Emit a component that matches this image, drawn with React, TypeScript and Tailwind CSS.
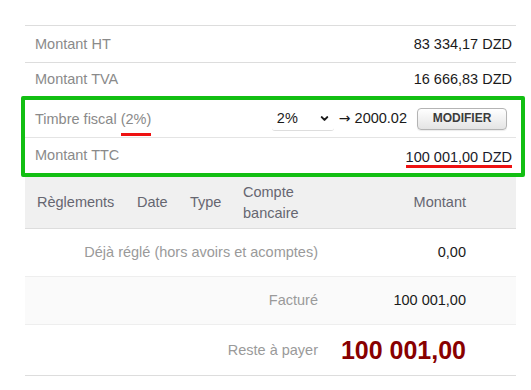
import { ChevronDown } from "lucide-react";

const cols = ["w-[100px]", "w-[53px]", "w-[53px]", "w-[99px]", "w-[148px]", "w-[38px]"];

function TotalRow({ label, value, className = "" }: { label: React.ReactNode; value: React.ReactNode; className?: string }) {
  return (
    <div className={`flex items-center justify-between pl-[10px] pr-[4px] ${className}`}>
      <span className="text-[#8a8a8a]">{label}</span>
      <span className="text-[#1a1a1a]">{value}</span>
    </div>
  );
}

export default function App() {
  return (
    <div
      className="w-[531px] h-[390px] bg-white pt-[25px] pl-[25px] text-[14.5px] leading-[17px]"
      style={{ fontFamily: '"Liberation Sans", Arial, sans-serif' }}
    >
      <div className="w-[491px]">
        <TotalRow label="Montant HT" value="83 334,17 DZD" className="h-[37px] border-t border-[#dddddd]" />
        <TotalRow label="Montant TVA" value="16 666,83 DZD" className="h-[34px] border-t border-[#dddddd]" />

        {/* highlighted block */}
        <div className="-ml-[4px] w-[504px] border-4 border-[#12bf12] rounded-[2px] pr-[5px]">
          <div className="flex items-center justify-between h-[37px] pl-[10px] pr-[9px]">
            <span className="text-[#8a8a8a]">
              Timbre fiscal{" "}
              <span className="inline-block leading-[16px] pt-[9px] pb-[6px] border-b-[3px] border-[#ee1111]">(2%)</span>
            </span>
            <div className="flex items-center text-[#1a1a1a]">
              <div className="flex items-center justify-between w-[62px] h-[24px] mt-[1px] pl-[5px] pr-[4px] border-b border-[#dddddd] rounded-b-[3px]">
                <span>2%</span>
                <ChevronDown className="w-[11px] h-[11px]" strokeWidth={4.5} />
              </div>
              <span className="ml-[5px]">
                <span className="text-[14px]" style={{ fontFamily: '"DejaVu Sans", sans-serif' }}>→</span> 2000.02
              </span>
              <button className="ml-[10px] w-[90px] h-[22px] rounded-[4px] border border-[#b4b4b4] bg-gradient-to-b from-white to-[#e4e4e4] text-[12px] font-bold text-[#3c3c3c] shadow-[0_1px_1px_rgba(0,0,0,0.08)]">
                MODIFIER
              </button>
            </div>
          </div>
          <div className="flex items-center justify-between h-[36px] border-t border-[#e4e4e4] pl-[10px] pr-[4px]">
            <span className="text-[#8a8a8a]">Montant TTC</span>
            <span className="inline-block leading-[16px] pt-[5px] border-b-[3px] border-[#ee1111] text-[#1a1a2a]">
              100 001,00 DZD
            </span>
          </div>
        </div>

        {/* payments */}
        <div className="flex h-[52px] bg-[#f0f0f0] border-b border-[#dddddd] text-[#666670] items-center">
          <div className={`${cols[0]} pl-[12px]`}>Règlements</div>
          <div className={`${cols[1]} pl-[12px]`}>Date</div>
          <div className={`${cols[2]} pl-[12px]`}>Type</div>
          <div className={`${cols[3]} pl-[12px] leading-[21px]`}>
            Compte
            <br />
            bancaire
          </div>
          <div className={`${cols[4]} pr-[12px] text-right`}>Montant</div>
          <div className={cols[5]} />
        </div>

        <div className="flex h-[48px] items-center border-b border-[#eeeeee]">
          <div className="w-[305px] shrink-0 pr-[12px] text-right text-[#9a9a9a]">Déjà réglé (hors avoirs et acomptes)</div>
          <div className={`${cols[4]} shrink-0 pr-[12px] text-right text-[#1a1a1a]`}>0,00</div>
          <div className={cols[5]} />
        </div>

        <div className="flex h-[48px] items-center bg-[#fafafa] border-b border-[#eeeeee]">
          <div className="w-[305px] shrink-0 pr-[12px] text-right text-[#9a9a9a]">Facturé</div>
          <div className={`${cols[4]} shrink-0 pr-[12px] text-right text-[#1a1a1a]`}>100 001,00</div>
          <div className={cols[5]} />
        </div>

        <div className="flex h-[51px] items-center border-b border-[#dddddd]">
          <div className="w-[305px] shrink-0 pr-[12px] text-right text-[#9a9a9a]">Reste à payer</div>
          <div className={`${cols[4]} shrink-0 pr-[12px] text-right text-[25px] leading-[28px] font-bold text-[#880000]`}>
            100 001,00
          </div>
          <div className={cols[5]} />
        </div>
      </div>
    </div>
  );
}
